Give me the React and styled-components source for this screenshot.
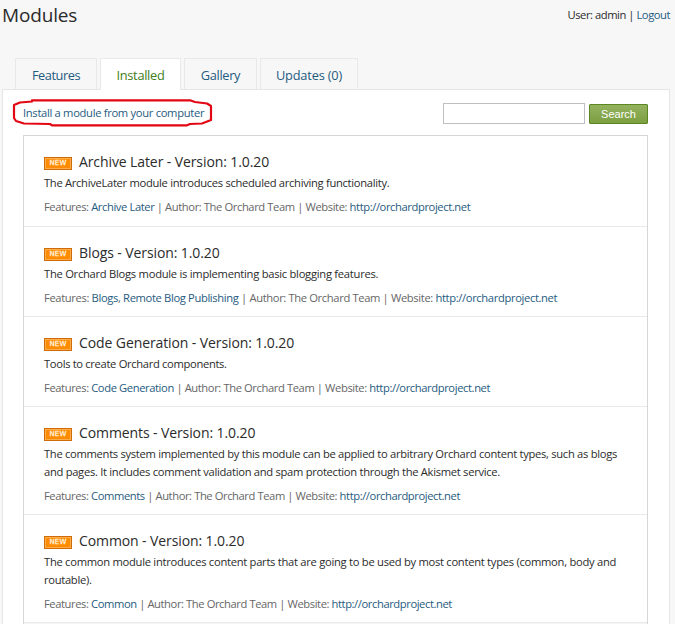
import React from "react";
import styled, { createGlobalStyle } from "styled-components";

const Global = createGlobalStyle`
  * { box-sizing: border-box; }
  body { margin: 0; background: #fff; overflow: hidden; }
`;

const Page = styled.div`
  width: 675px;
  height: 624px;
  overflow: hidden;
  display: flex;
  flex-direction: column;
  background: #f7f7f7;
  color: #2b2b2b;
  font: 11.2px/18px "Open Sans", "Noto Sans", sans-serif;
  white-space: nowrap;
`;

const Header = styled.header`
  display: flex;
  justify-content: space-between;
  height: 58px;
  flex: none;
  padding: 2px 5px 0 2px;
`;

const Heading = styled.h1`
  margin: -1px 0 0;
  font-size: 19px;
  line-height: 28px;
  font-weight: 400;
  letter-spacing: -0.15px;
`;

const Text = styled.span`
  letter-spacing: ${(p) => p.$ls}px;
`;

const UserBar = styled.div`
  padding-top: 4px;
  letter-spacing: -0.45px;
`;

const Link = styled.a`
  color: #1f5b80;
`;

const Tabs = styled.nav`
  display: flex;
  gap: 3px;
  height: 32px;
  flex: none;
  padding-left: 15px;
  position: relative;
  z-index: 1;
`;

const Tab = styled.a`
  display: flex;
  justify-content: center;
  width: ${(p) => p.$w}px;
  height: ${(p) => (p.$active ? 32 : 31)}px;
  padding-top: 7px;
  border: 1px solid #e9e9e9;
  border-bottom: 0;
  background: ${(p) => (p.$active ? "#fff" : "#f7f7f7")};
  color: ${(p) => (p.$active ? "#3f7d20" : "#1f5b80")};
  font-size: 12.8px;
`;

const Panel = styled.main`
  width: 668px;
  height: 560px;
  flex: none;
  margin: -1px 0 0 2px;
  padding: 0 21px 0 20px;
  background: #fff;
  border: 1px solid #e6e6e6;
`;

const Toolbar = styled.div`
  display: flex;
  justify-content: space-between;
  height: 45px;
`;

const InstallLink = styled.a`
  position: relative;
  height: 18px;
  margin-top: 14px;
  color: #1f5b80;
`;

const Outline = styled.svg`
  position: absolute;
  left: -11px;
  top: -6px;
`;

const SearchForm = styled.form`
  display: flex;
  gap: 4px;
  padding-top: 14px;
`;

const SearchInput = styled.input`
  width: 142px;
  height: 21px;
  margin: -1px 0 0;
  border: 1px solid #bfbfbf;
  border-radius: 0;
  background: #fff;
  outline: 0;
`;

const SearchButton = styled.button`
  width: 59px;
  height: 20px;
  padding: 0;
  border: 1px solid #5b8723;
  border-radius: 1px;
  background: linear-gradient(#94b25f, #7c9f41);
  color: #fff;
  font: 11px/18px "Liberation Sans", Arial, sans-serif;
`;

const List = styled.ul`
  width: 625px;
  height: 500px;
  margin: 0;
  padding: 0;
  list-style: none;
  border: 1px solid #d6d6d6;
  background: #f4f4f4;
`;

const Row = styled.li`
  padding: 16px 20px 9px;
  border-bottom: 1px solid #e9e9e9;
  background: #fff;

  &:first-child {
    padding-bottom: 10px;
  }
`;

const TitleLine = styled.div`
  display: flex;
  align-items: center;
  gap: 7px;
  height: 20px;
`;

const Badge = styled.span`
  display: flex;
  width: 28px;
  height: 13px;
  margin-top: 3px;
  border: 1px solid #cf6c08;
  background: #ff8c00;
  box-shadow: inset 0 0 0 1px #ffad4a;
  align-items: center;
  justify-content: center;
  color: #fff4e0;
  font: 7px/11px "DejaVu Sans", sans-serif;
  letter-spacing: 0.2px;
  -webkit-text-stroke: 0.25px #fff4e0;
`;

const Title = styled.h2`
  margin: 0;
  font-size: 14px;
  line-height: 20px;
  font-weight: 400;
  letter-spacing: -0.1px;
`;

const Description = styled.p`
  margin: 2px 0 6px;
`;

const Meta = styled.div`
  height: 18px;
  color: #666;
  letter-spacing: ${(p) => p.$ls}px;
`;

const modules = [
  {
    name: "Archive Later",
    lines: [["The ArchiveLater module introduces scheduled archiving functionality.", -0.3]],
    features: ["Archive Later"],
    metaSpacing: -0.4,
  },
  {
    name: "Blogs",
    lines: [["The Orchard Blogs module is implementing basic blogging features.", -0.265]],
    features: ["Blogs", "Remote Blog Publishing"],
    metaSpacing: -0.357,
  },
  {
    name: "Code Generation",
    lines: [["Tools to create Orchard components.", -0.33]],
    features: ["Code Generation"],
    metaSpacing: -0.395,
  },
  {
    name: "Comments",
    lines: [
      ["The comments system implemented by this module can be applied to arbitrary Orchard content types, such as blogs", -0.3],
      ["and pages. It includes comment validation and spam protection through the Akismet service.", -0.295],
    ],
    features: ["Comments"],
    metaSpacing: -0.41,
  },
  {
    name: "Common",
    lines: [
      ["The common module introduces content parts that are going to be used by most content types (common, body and", -0.277],
      ["routable).", -0.3],
    ],
    features: ["Common"],
    metaSpacing: -0.41,
  },
];

function ModuleRow({ item }) {
  return (
    <Row>
      <TitleLine>
        <Badge>NEW</Badge>
        <Title>{item.name} - Version: 1.0.20</Title>
      </TitleLine>
      <Description>
        {item.lines.map(([line, ls], i) => (
          <React.Fragment key={line}>
            {i > 0 && <br />}
            <Text $ls={ls}>{line}</Text>
          </React.Fragment>
        ))}
      </Description>
      <Meta $ls={item.metaSpacing}>
        Features:{" "}
        {item.features.map((f, i) => (
          <React.Fragment key={f}>
            {i > 0 && ", "}
            <Link>{f}</Link>
          </React.Fragment>
        ))}{" "}
        | Author: The Orchard Team | Website: <Link>http://orchardproject.net</Link>
      </Meta>
    </Row>
  );
}

export default function App() {
  return (
    <>
      <Global />
      <Page>
        <Header>
          <Heading>Modules</Heading>
          <UserBar>
            User: admin | <Link>Logout</Link>
          </UserBar>
        </Header>
        <Tabs>
          <Tab $w={82}><Text $ls={-0.45}>Features</Text></Tab>
          <Tab $w={81} $active><Text $ls={-0.3}>Installed</Text></Tab>
          <Tab $w={73}><Text $ls={-0.33}>Gallery</Text></Tab>
          <Tab $w={98}><Text $ls={-0.18}>Updates (0)</Text></Tab>
        </Tabs>
        <Panel>
          <Toolbar>
            <InstallLink>
              <Text $ls={-0.31}>Install a module from your computer</Text>
              <Outline width="202" height="30" viewBox="0 0 202 30" fill="none" stroke="#e30613" strokeWidth="2.2" strokeLinejoin="round">
                <path d="M20 2.3 H178 L183 4 L195 5.5 L199 8 V22 L190 25.5 L178 26 L175 27.3 H40 L38 26 L12 25.5 L4 23 L2 20 V7 L8 4.5 L20 3.5 Z" />
              </Outline>
            </InstallLink>
            <SearchForm>
              <SearchInput aria-label="Search modules" />
              <SearchButton type="button">Search</SearchButton>
            </SearchForm>
          </Toolbar>
          <List>
            {modules.map((m) => <ModuleRow key={m.name} item={m} />)}
          </List>
        </Panel>
      </Page>
    </>
  );
}
